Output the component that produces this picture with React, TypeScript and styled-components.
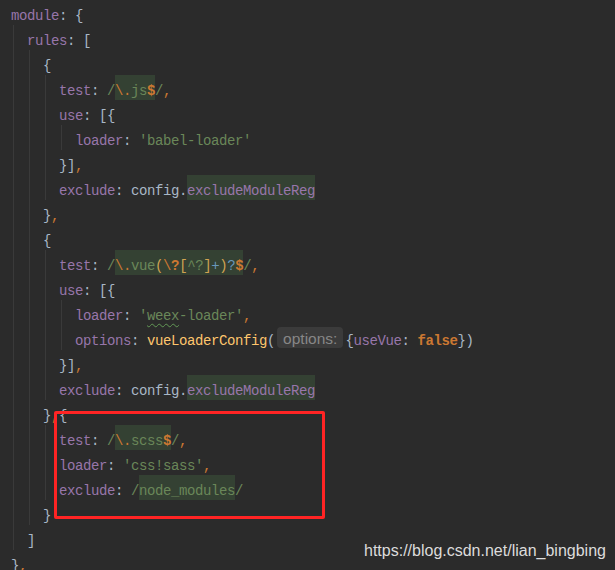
import styled, { createGlobalStyle } from "styled-components";
import type { ReactNode } from "react";

const GlobalStyle = createGlobalStyle`
	html, body {
		margin: 0;
		padding: 0;
		background: #2b2b2b;
	}
`;

const Row = ({ indent, children }: { indent: number; children?: ReactNode }) => (
	<Line>
		{Array.from({ length: indent }, (_, i) => (
			<Guide key={i} />
		))}
		{children}
	</Line>
);

const App = () => {
	return (
		<Editor>
			<GlobalStyle />
			<Row indent={0}>
				<Key>module</Key>
				{": {"}
			</Row>
			<Row indent={1}>
				<Key>rules</Key>
				{": ["}
			</Row>
			<Row indent={2}>{"{"}</Row>
			<Row indent={3}>
				<Key>test</Key>
				{": "}
				<Str>/</Str>
				<Mark>
					<Esc>\.</Esc>
					<Str>js</Str>
					<Esc $bold>$</Esc>
				</Mark>
				<Str>/</Str>
				<Comma>,</Comma>
			</Row>
			<Row indent={3}>
				<Key>use</Key>
				{": [{"}
			</Row>
			<Row indent={4}>
				<Key>loader</Key>
				{": "}
				<Str>'babel-loader'</Str>
			</Row>
			<Row indent={3}>
				{"}]"}
				<Comma>,</Comma>
			</Row>
			<Row indent={3}>
				<Key>exclude</Key>
				{": config."}
				<Mark>
					<Key>excludeModuleReg</Key>
				</Mark>
			</Row>
			<Row indent={2}>
				{"}"}
				<Comma>,</Comma>
			</Row>
			<Row indent={2}>{"{"}</Row>
			<Row indent={3}>
				<Key>test</Key>
				{": "}
				<Str>/</Str>
				<Mark>
					<Esc>\.</Esc>
					<Str>vue</Str>
					<Group>(</Group>
					<Esc>\</Esc>
					<Esc $bold>?</Esc>
					<Group>[</Group>
					<Str>^?</Str>
					<Group>]</Group>
					<Quant>+</Quant>
					<Group>)</Group>
					<Quant>?</Quant>
					<Esc $bold>$</Esc>
				</Mark>
				<Str>/</Str>
				<Comma>,</Comma>
			</Row>
			<Row indent={3}>
				<Key>use</Key>
				{": [{"}
			</Row>
			<Row indent={4}>
				<Key>loader</Key>
				{": "}
				<Str>'</Str>
				<Typo>weex</Typo>
				<Str>-loader'</Str>
				<Comma>,</Comma>
			</Row>
			<Row indent={4}>
				<Key>options</Key>
				{": "}
				<Fn>vueLoaderConfig</Fn>
				{"("}
				<Hint>options:</Hint>
				{"{"}
				<Key>useVue</Key>
				{": "}
				<Bool>false</Bool>
				{"})"}
			</Row>
			<Row indent={3}>
				{"}]"}
				<Comma>,</Comma>
			</Row>
			<Row indent={3}>
				<Key>exclude</Key>
				{": config."}
				<Mark>
					<Key>excludeModuleReg</Key>
				</Mark>
			</Row>
			<Row indent={2}>
				{"}"}
				<Comma>,</Comma>
				{"{"}
			</Row>
			<Row indent={3}>
				<Key>test</Key>
				{": "}
				<Str>/</Str>
				<Mark>
					<Esc>\.</Esc>
					<Str>scss</Str>
					<Esc $bold>$</Esc>
				</Mark>
				<Str>/</Str>
				<Comma>,</Comma>
			</Row>
			<Row indent={3}>
				<Key>loader</Key>
				{": "}
				<Str>'css!sass'</Str>
				<Comma>,</Comma>
			</Row>
			<Row indent={3}>
				<Key>exclude</Key>
				{": "}
				<Str>/</Str>
				<Mark>
					<Str>node_modules</Str>
				</Mark>
				<Str>/</Str>
			</Row>
			<Row indent={2}>{"}"}</Row>
			<Row indent={1}>{"]"}</Row>
			<Row indent={0}>
				{"}"}
				<Comma>,</Comma>
			</Row>

			<Callout />
			<Watermark>https://blog.csdn.net/lian_bingbing</Watermark>
		</Editor>
	);
};

export default App;

const Editor = styled.div`
	position: relative;
	box-sizing: border-box;
	width: 615px;
	height: 570px;
	overflow: hidden;
	padding-left: 11px;
	background: #2b2b2b;
	color: #a9b7c6;
	font-family: "Liberation Mono", "DejaVu Sans Mono", monospace;
	font-size: 14px;
	letter-spacing: -0.4px;
`;

const Line = styled.div`
	height: 25px;
	line-height: 33px;
	white-space: pre;
`;

const Guide = styled.span`
	display: inline-block;
	width: 16px;
	height: 25px;
	vertical-align: top;
	background: linear-gradient(#3a3a3a, #3a3a3a) no-repeat 2px 0 / 1px 100%;
`;

const Mark = styled.span`
	display: inline-block;
	height: 25px;
	background: #344133;
`;

const Key = styled.span`
	color: #9876aa;
`;

const Comma = styled.span`
	color: #cc7832;
`;

const Str = styled.span`
	color: #6a8759;
`;

const Typo = styled(Str)`
	text-decoration: underline wavy #629755;
	text-decoration-thickness: 1px;
	text-underline-offset: 3px;
`;

const Esc = styled.span<{ $bold?: boolean }>`
	color: #cc7832;
	font-weight: ${(p) => (p.$bold ? 700 : 400)};
`;

const Group = styled.span`
	color: #cfa352;
`;

const Quant = styled.span`
	color: #6897bb;
`;

const Fn = styled.span`
	color: #ffc66d;
`;

const Bool = styled.span`
	color: #cc7832;
	font-weight: 700;
`;

const Hint = styled.span`
	display: inline-block;
	height: 21px;
	margin: 2px 2px 0;
	padding: 0 6px;
	vertical-align: top;
	border-radius: 4px;
	background: #3b3b3b;
	color: #878787;
	font-family: "Liberation Sans", Arial, sans-serif;
	font-size: 15.5px;
	line-height: 23px;
	letter-spacing: 0;
`;

const Callout = styled.div`
	position: absolute;
	left: 54px;
	top: 411px;
	width: 271px;
	height: 108px;
	box-sizing: border-box;
	border: 3px solid #ff2424;
	border-radius: 2px;
`;

const Watermark = styled.div`
	position: absolute;
	left: 364px;
	top: 541px;
	color: #dcdcdc;
	font-family: "Liberation Sans", Arial, sans-serif;
	font-size: 16px;
	line-height: 20px;
	letter-spacing: 0;
`;
